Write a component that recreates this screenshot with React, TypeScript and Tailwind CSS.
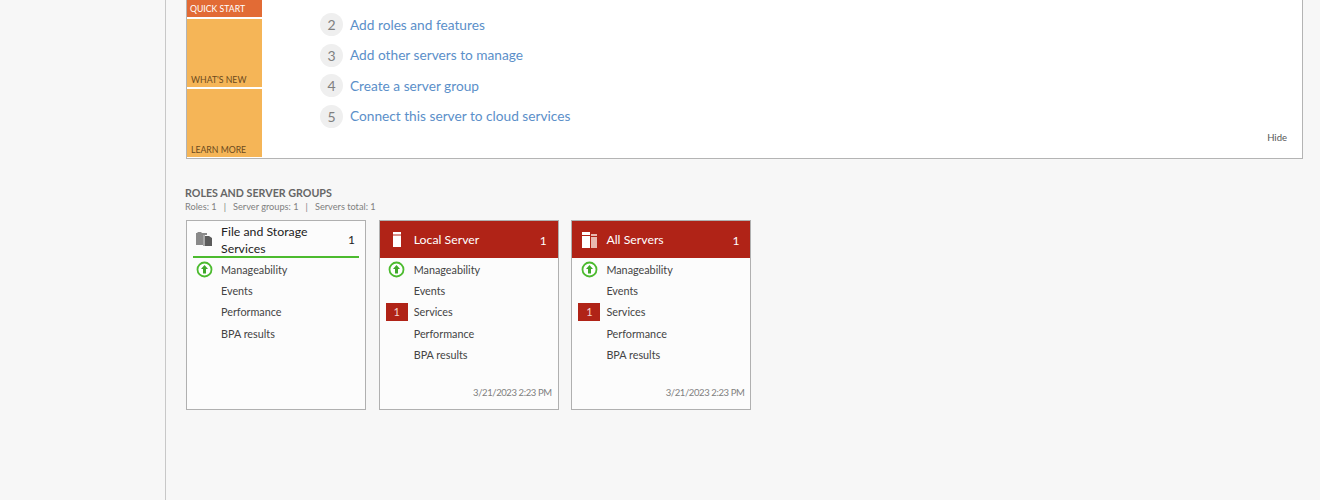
function UpIcon() {
  return (
    <svg width="17" height="17" viewBox="0 0 17 17" className="shrink-0">
      <circle cx="8.5" cy="8.5" r="7" fill="#ffffff" stroke="#4cbb2f" strokeWidth="1.8" />
      <path d="M8.5 4 L12 8 H10 V12.5 H7 V8 H5 Z" fill="#3fa82a" />
    </svg>
  );
}

function FolderIcon() {
  return (
    <svg width="16" height="14" viewBox="0 0 16 14">
      <path d="M0 1 H1 L2 0 H5 L6 1 H11 V3 H8 V13 H0 Z" fill="#8a8a8a" />
      <path d="M9 4 H13 L16 6 V14 H9 Z" fill="#5c5c5c" />
      <path d="M7 3 H9 V14 H7 Z" fill="#a8a8a8" />
    </svg>
  );
}

function ServerIcon() {
  return (
    <svg width="8" height="15" viewBox="0 0 8 15">
      <rect x="0" y="0" width="8" height="2.5" fill="#ffffff" />
      <rect x="0" y="3.5" width="8" height="11.5" fill="#ffffff" />
    </svg>
  );
}

function ServersIcon() {
  return (
    <svg width="15" height="16" viewBox="0 0 15 16">
      <rect x="0" y="0" width="8" height="3" fill="#ffffff" />
      <rect x="0" y="4" width="8" height="12" fill="#ffffff" />
      <rect x="9" y="2" width="6" height="2" fill="#e8b8b0" />
      <rect x="9" y="5" width="6" height="11" fill="#e8b8b0" />
    </svg>
  );
}

function Row({ label, up, badge }: { label: string; up?: boolean; badge?: boolean }) {
  return (
    <div className="flex h-[21.3px] items-center">
      <div className="flex w-[34px] shrink-0 items-center justify-center">
        {up && <UpIcon />}
        {badge && (
          <div className="flex h-[18px] w-[22px] items-center justify-center bg-[#b02317] text-[11px] text-[#f5d5d0]">
            1
          </div>
        )}
      </div>
      <span className="text-[10.8px] text-[#444444]">{label}</span>
    </div>
  );
}

function Card({
  title,
  icon,
  red,
  rows,
  time,
}: {
  title: string;
  icon: React.ReactNode;
  red?: boolean;
  rows: { label: string; up?: boolean; badge?: boolean }[];
  time?: string;
}) {
  return (
    <div className="relative flex h-[190px] w-[180px] flex-col border border-[#b0b0b0] bg-[#fcfcfc]">
      {red ? (
        <div className="flex h-[37px] shrink-0 items-center bg-[#b02317] pr-[11px] text-white">
          <div className="flex w-[34px] shrink-0 justify-center">{icon}</div>
          <span className="flex-1 pt-[2px] text-[12.3px]">{title}</span>
          <span className="pt-[2px] text-[12px]">1</span>
        </div>
      ) : (
        <div className="mx-[6px] flex h-[37px] shrink-0 items-center border-b-2 border-[#4cbb2f] pr-[4px] text-[#222222]">
          <div className="flex w-[28px] shrink-0 justify-start pl-[3px]">{icon}</div>
          <span className="flex-1 pt-[2px] text-[12.3px] leading-[17px]">{title}</span>
          <span className="pt-[2px] text-[12px]">1</span>
        </div>
      )}
      <div className="mt-[1.2px] flex flex-col">
        {rows.map((r) => (
          <Row key={r.label} {...r} />
        ))}
      </div>
      {time && (
        <div className="mt-auto pr-[6px] pb-[9px] text-right text-[9.5px] tracking-[-0.4px] text-[#808080]">{time}</div>
      )}
    </div>
  );
}

export default function App() {
  const steps = [
    { n: 2, text: "Add roles and features" },
    { n: 3, text: "Add other servers to manage" },
    { n: 4, text: "Create a server group" },
    { n: 5, text: "Connect this server to cloud services" },
  ];
  const serverRows = [
    { label: "Manageability", up: true },
    { label: "Events" },
    { label: "Services", badge: true },
    { label: "Performance" },
    { label: "BPA results" },
  ];

  return (
    <div className="flex h-[500px] w-[1320px] overflow-hidden bg-[#f7f7f7] font-[Lato,sans-serif]">
      {/* left nav */}
      <div className="w-[166px] shrink-0 border-r border-[#c8c8c8]" />

      <div className="flex flex-1 flex-col pl-[19px] pr-[17px]">
        {/* welcome panel */}
        <div className="ml-[1px] flex h-[159px] shrink-0 border border-t-0 border-[#b4b4b4] bg-white">
          <div className="flex w-[75px] shrink-0 flex-col text-[8.7px]">
            <div className="flex h-[17px] items-end bg-[#e26b35] px-[3px] pb-[2px] text-white">QUICK START</div>
            <div className="mt-[2px] flex h-[68px] items-end bg-[#f5b557] px-[4px] pb-[1px] text-[#6b4a1e]">WHAT'S NEW</div>
            <div className="mt-[2px] flex h-[68px] items-end bg-[#f5b557] px-[4px] pb-[1px] text-[#6b4a1e]">LEARN MORE</div>
          </div>
          <div className="relative flex-1 pl-[58px] pt-[9.5px]">
            {steps.map((s) => (
              <div key={s.n} className="flex h-[30.6px] items-center">
                <div className="flex h-[23px] w-[23px] items-center justify-center rounded-full bg-[#efefef] text-[14px] text-[#808080]">
                  {s.n}
                </div>
                <span className="ml-[7px] text-[13.7px] text-[#5b8fc9]">{s.text}</span>
              </div>
            ))}
            <span className="absolute right-[15px] bottom-[13px] text-[9.5px] text-[#555555]">Hide</span>
          </div>
        </div>

        {/* roles and server groups */}
        <div className="mt-[27px] text-[10.7px] font-bold leading-[14px] text-[#666666]">ROLES AND SERVER GROUPS</div>
        <div className="text-[9.2px] leading-[13px] text-[#808080]">
          Roles: 1 &nbsp;&nbsp;|&nbsp;&nbsp; Server groups: 1 &nbsp;&nbsp;|&nbsp;&nbsp; Servers total: 1
        </div>
        <div className="mt-[7px] flex gap-[12.7px] pl-[1px]">
          <Card
            title="File and Storage Services"
            icon={<FolderIcon />}
            rows={[
              { label: "Manageability", up: true },
              { label: "Events" },
              { label: "Performance" },
              { label: "BPA results" },
            ]}
          />
          <Card title="Local Server" icon={<ServerIcon />} red rows={serverRows} time="3/21/2023 2:23 PM" />
          <Card title="All Servers" icon={<ServersIcon />} red rows={serverRows} time="3/21/2023 2:23 PM" />
        </div>
      </div>
    </div>
  );
}
